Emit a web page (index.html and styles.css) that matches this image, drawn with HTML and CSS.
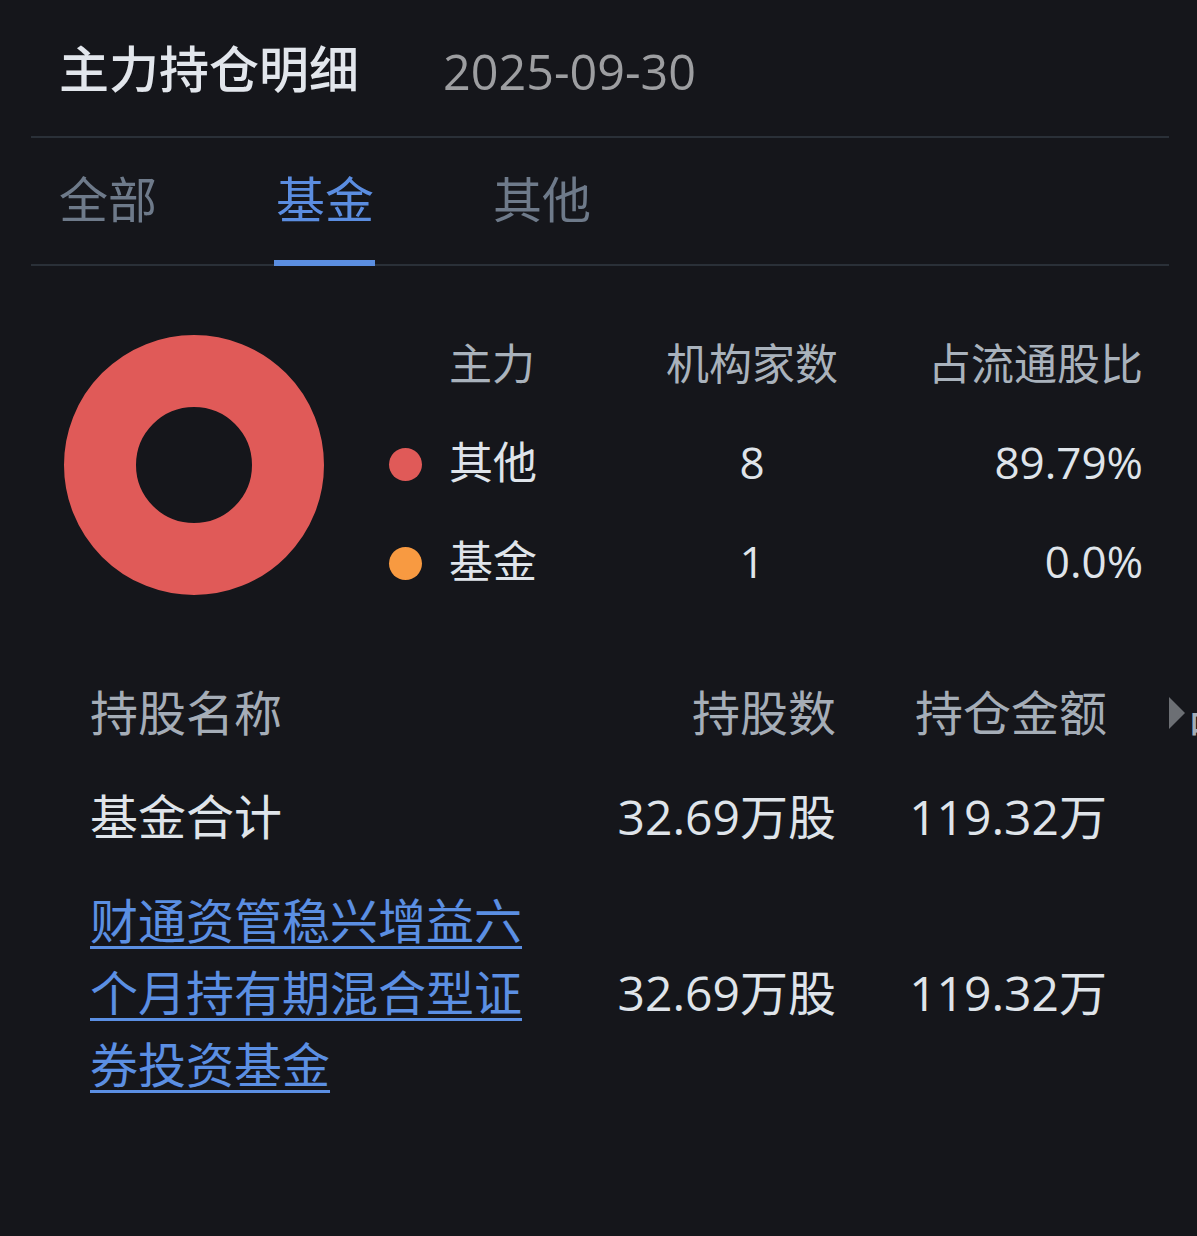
FILE: index.html
```html
<!DOCTYPE html>
<html lang="zh-CN">
<head>
<meta charset="utf-8">
<title>主力持仓明细</title>
<link rel="stylesheet" href="styles.css">
</head>
<body>
<div class="page">
  <header class="head">
    <h1 class="title">主力持仓明细</h1>
    <span class="date">2025-09-30</span>
  </header>

  <nav class="tabs">
    <span class="tab">全部</span>
    <span class="tab active">基金</span>
    <span class="tab">其他</span>
  </nav>

  <section class="chart">
    <svg class="donut" width="260" height="260" viewBox="0 0 260 260">
      <circle cx="130" cy="130" r="94" fill="none" stroke="#e05a58" stroke-width="72"/>
    </svg>
    <div class="legend">
      <span></span>
      <span class="lh name">主力</span>
      <span class="lh count">机构家数</span>
      <span class="lh pct">占流通股比</span>

      <span class="dot red"></span>
      <span class="lv name">其他</span>
      <span class="lv count">8</span>
      <span class="lv pct">89.79%</span>

      <span class="dot orange"></span>
      <span class="lv name">基金</span>
      <span class="lv count">1</span>
      <span class="lv pct">0.0%</span>
    </div>
  </section>

  <section class="holdings">
    <div class="row hdr">
      <span class="c-name">持股名称</span>
      <span class="c-num">持股数</span>
      <span class="c-amt">持仓金额</span>
      <span class="c-more"><i class="tri"></i>占比</span>
    </div>
    <div class="row total">
      <span class="c-name">基金合计</span>
      <span class="c-num">32.69万股</span>
      <span class="c-amt">119.32万</span>
      <span class="c-more"></span>
    </div>
    <div class="row fund">
      <a class="c-name link" href="#">财通资管稳兴增益六个月持有期混合型证券投资基金</a>
      <span class="c-num">32.69万股</span>
      <span class="c-amt">119.32万</span>
      <span class="c-more"></span>
    </div>
  </section>
</div>
</body>
</html>
```

FILE: styles.css
```css
html, body {
  margin: 0;
  padding: 0;
  background: #15161b;
  overflow: hidden;
}
body {
  font-family: "Open Sans", "Noto Sans CJK SC", sans-serif;
  color: #dfe4ea;
  width: 1197px;
  height: 1236px;
}
.page {
  padding: 0 28px 0 31px;
}

/* header */
.head {
  display: flex;
  align-items: center;
  padding-left: 28px;
  border-bottom: 2px solid #2a3038;
  box-sizing: border-box;
  height: 138px;
}
.title {
  margin: 0;
  font-family: "Noto Sans CJK SC", sans-serif;
  font-size: 50px;
  font-weight: 500;
  color: #e2e6ec;
  line-height: 1;
  padding-bottom: 4px;
}
.date {
  margin-left: 84px;
  font-size: 48.5px;
  color: #9d9ea1;
  line-height: 1;
  padding-top: 6px;
}

/* tabs */
.tabs {
  display: flex;
  gap: 119px;
  padding-left: 28px;
  height: 128px;
  border-bottom: 2px solid #2a3038;
  box-sizing: border-box;
}
.tab {
  position: relative;
  font-family: "Noto Sans CJK SC", sans-serif;
  font-size: 49px;
  line-height: 1;
  color: #6e7a8a;
  padding-top: 34px;
}
.tab.active {
  color: #5b8de0;
}
.tab.active::after {
  content: "";
  position: absolute;
  left: -2px;
  right: -1px;
  bottom: -2px;
  height: 6px;
  background: #5b8ee0;
}

/* chart */
.chart {
  display: flex;
  align-items: center;
  margin-top: 50px;
  padding-left: 33px;
}
.donut {
  display: block;
  flex: none;
}
.legend {
  margin-left: 65px;
  display: grid;
  grid-template-columns: 60px 150px 306px 238px;
  grid-auto-rows: 99px;
  align-items: center;
}
.lh {
  font-size: 43px;
  color: #a9b2bc;
  line-height: 1;
  padding-bottom: 4px;
}
.lv {
  font-size: 44px;
  color: #dfe4ea;
  line-height: 1;
  padding-bottom: 6px;
}
.count { text-align: center; }
.pct { text-align: right; }
.dot {
  width: 33px;
  height: 33px;
  border-radius: 50%;
}
.dot.red { background: #e05a58; }
.dot.orange { background: #f89a41; }

/* holdings */
.holdings {
  margin-top: 48px;
  padding-left: 59px;
}
.row {
  display: grid;
  grid-template-columns: 470px 276px 271px 62px 120px;
  align-items: center;
  font-size: 48px;
  line-height: 1;
  white-space: nowrap;
}
.row.hdr {
  height: 104px;
  color: #a5adb7;
}
.row.total {
  height: 104px;
  color: #dfe4ea;
}
.row.fund {
  padding: 16px 0;
  color: #dfe4ea;
}
.c-num, .c-amt { text-align: right; }
.c-more {
  grid-column: 5;
  display: flex;
  align-items: center;
  color: #a5adb7;
}
.tri {
  display: inline-block;
  width: 0;
  height: 0;
  border-top: 16px solid transparent;
  border-bottom: 16px solid transparent;
  border-left: 16px solid #6c6f74;
}
.link {
  white-space: normal;
  color: #5b8fe3;
  text-decoration: underline;
  text-decoration-thickness: 3px;
  text-underline-offset: 7px;
  line-height: 72px;
  width: 440px;
}
```
